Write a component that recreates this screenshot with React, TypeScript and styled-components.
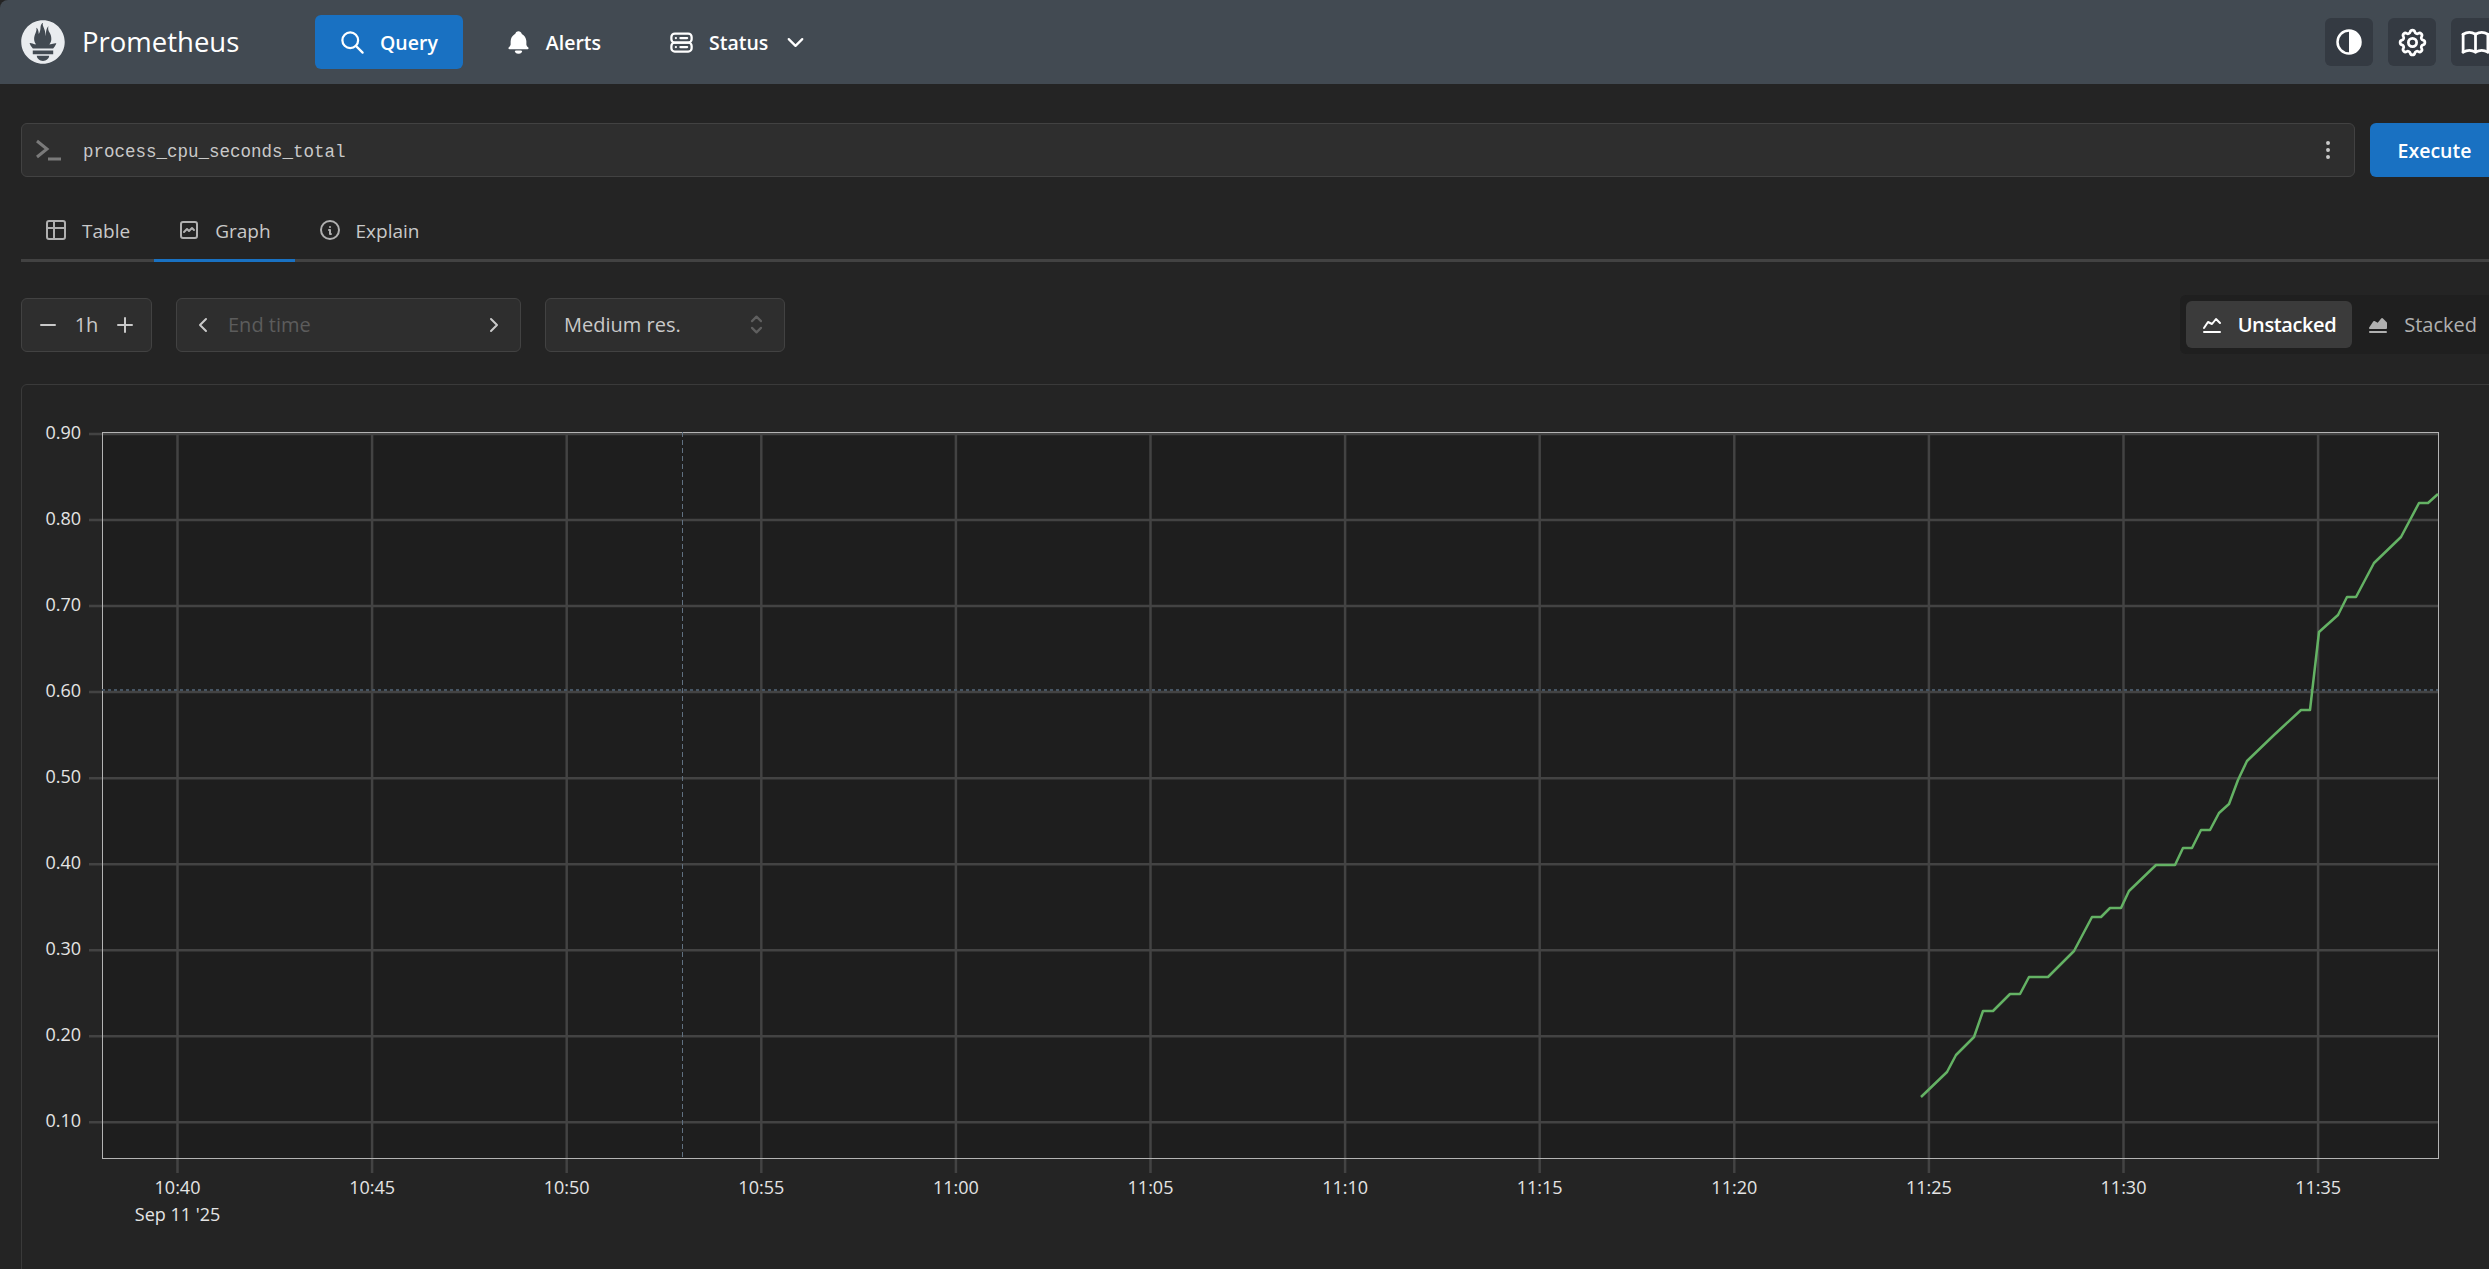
import { useMemo } from 'react';
import styled, { createGlobalStyle } from 'styled-components';
import {
  TbBellFilled,
  TbBook,
  TbChartAreaFilled,
  TbChartLine,
  TbChevronDown,
  TbChevronLeft,
  TbChevronRight,
  TbDotsVertical,
  TbGraph,
  TbInfoCircle,
  TbMinus,
  TbPlus,
  TbSearch,
  TbSelector,
  TbServer2,
  TbSettings,
  TbTable,
} from 'react-icons/tb';

const SANS = '"Open Sans", "Noto Sans", "Liberation Sans", sans-serif';

const GlobalStyle = createGlobalStyle`
  html, body {
    margin: 0;
    padding: 0;
    height: 100%;
    overflow: hidden;
    background: #242424;
  }
  body {
    font-family: ${SANS};
  }
`;

const LOGO =
  'M56.667.667C25.372.667 0 26.036 0 57.332c0 31.295 25.372 56.666 56.667 56.666s56.666-25.371 56.666-56.666C113.333 26.036 87.961.667 56.667.667zm0 106.055c-8.904 0-16.123-5.948-16.123-13.283H72.79c0 7.334-7.219 13.283-16.123 13.283zM83.297 89H30.034v-9.658h53.264V89zm-.191-14.629H30.186c-.176-.203-.356-.403-.526-.609-5.452-6.62-6.736-10.076-7.983-13.598-.021-.116 6.611 1.355 11.314 2.413 0 0 2.42.56 5.958 1.205-3.397-3.982-5.414-9.044-5.414-14.218 0-11.359 8.712-21.285 5.569-29.308 3.059.249 6.331 6.456 6.552 16.161 3.252-4.494 4.613-12.701 4.613-17.733 0-5.21 3.433-11.262 6.867-11.469-3.061 5.045.793 9.37 4.219 20.099 1.285 4.03 1.121 10.812 2.113 15.113C63.797 33.534 65.333 20.5 71 16c-2.5 5.667.37 12.758 2.333 16.167 3.167 5.5 5.087 9.667 5.087 17.548 0 5.284-1.951 10.259-5.242 14.148 3.742-.702 6.326-1.335 6.326-1.335l12.152-2.371c.001-.001-1.765 7.261-8.55 14.214z';

// chart geometry, in page pixels relative to the panel's svg
const PLOT = { left: 102, top: 432, right: 2438, bottom: 1158 };
const X_TICKS = ['10:40', '10:45', '10:50', '10:55', '11:00', '11:05', '11:10', '11:15', '11:20', '11:25', '11:30', '11:35'];
const Y_TICKS = ['0.90', '0.80', '0.70', '0.60', '0.50', '0.40', '0.30', '0.20', '0.10'];
const SERIES: [number, number][] = [
  [1921, 1097], [1947, 1072], [1956, 1055], [1974, 1037], [1983, 1011], [1993, 1011],
  [2010, 994], [2020, 994], [2029, 977], [2048, 977], [2074, 951], [2092, 917],
  [2101, 917], [2110, 908], [2121, 908], [2129, 891], [2156, 865], [2175, 865],
  [2183, 848], [2192, 848], [2201, 830], [2210, 830], [2219, 813], [2229, 804],
  [2238, 780], [2247, 761], [2274, 735], [2301, 710], [2310, 710], [2319, 632],
  [2338, 615], [2347, 597], [2356, 597], [2374, 563], [2401, 537], [2419, 503],
  [2428, 503], [2438, 494],
];
const SVG_LEFT = 22;
const SVG_TOP = 385;

const Chart = () => {
  const points = useMemo(
    () => SERIES.map(([x, y]) => `${x - SVG_LEFT},${y - SVG_TOP}`).join(' '),
    [],
  );
  const left = PLOT.left - SVG_LEFT;
  const right = PLOT.right - SVG_LEFT;
  const top = PLOT.top - SVG_TOP;
  const bottom = PLOT.bottom - SVG_TOP;
  return (
    <ChartSvg width={2476} height={884}>
      <rect x={left} y={top} width={right - left} height={bottom - top} fill="#1e1e1e" />
      {X_TICKS.map((label, i) => {
        const x = 177.5 + i * 194.6 - SVG_LEFT;
        return (
          <g key={label}>
            <line x1={x} x2={x} y1={top + 2} y2={bottom + 15} stroke="#434343" strokeWidth={2.5} />
            <AxisText x={x} y={bottom + 36} textAnchor="middle">
              {label}
            </AxisText>
          </g>
        );
      })}
      {Y_TICKS.map((label, i) => {
        const y = 434 + i * 86.04 - SVG_TOP;
        return (
          <g key={label}>
            <line x1={left - 13} x2={right} y1={y} y2={y} stroke="#434343" strokeWidth={2.5} />
            <AxisText x={81 - SVG_LEFT} y={y + 5} textAnchor="end">
              {label}
            </AxisText>
          </g>
        );
      })}
      <AxisText x={177.5 - SVG_LEFT} y={bottom + 63} textAnchor="middle">
        Sep 11 '25
      </AxisText>
      <rect
        x={left + 0.5}
        y={top + 0.5}
        width={right - left}
        height={bottom - top}
        fill="none"
        stroke="#b4b4b4"
      />
      <line x1={682.5 - SVG_LEFT} x2={682.5 - SVG_LEFT} y1={top} y2={bottom} stroke="#607080" strokeDasharray="5 3" />
      <line x1={left} x2={right} y1={690 - SVG_TOP} y2={690 - SVG_TOP} stroke="#465462" strokeWidth={2} strokeDasharray="3 3" />
      <polyline points={points} fill="none" stroke="#64b264" strokeWidth={2.5} strokeLinejoin="round" />
    </ChartSvg>
  );
};

const App = () => {
  return (
    <Page>
      <GlobalStyle />
      <Header>
        <Brand>
          <svg width="44" height="44" viewBox="0 0 113.4 114.7">
            <path d={LOGO} fill="#e9ecef" />
          </svg>
          <BrandName>Prometheus</BrandName>
        </Brand>
        <Nav>
          <NavItem $active>
            <TbSearch size={27} />
            Query
          </NavItem>
          <NavItem>
            <TbBellFilled size={27} />
            Alerts
          </NavItem>
          <NavItem>
            <TbServer2 size={27} />
            Status
            <TbChevronDown size={27} />
          </NavItem>
        </Nav>
        <HeaderActions>
          <ActionButton>
            <svg width="30" height="30" viewBox="0 0 30 30">
              <circle cx="15" cy="15" r="11.5" fill="none" stroke="#fff" strokeWidth="2.5" />
              <path d="M15 3.5a11.5 11.5 0 0 1 0 23z" fill="#fff" />
            </svg>
          </ActionButton>
          <ActionButton>
            <TbSettings size={33} />
          </ActionButton>
          <ActionButton>
            <TbBook size={33} />
          </ActionButton>
        </HeaderActions>
      </Header>
      <Main>
        <QueryRow>
          <QueryBox>
            <PromptIcon>
              <svg width="28" height="24" viewBox="0 0 28 24" fill="none" stroke="currentColor">
                <path d="M2 3l10 8l-10 8" strokeWidth="3" />
                <path d="M13 21h13" strokeWidth="3" />
              </svg>
            </PromptIcon>
            <QueryText>process_cpu_seconds_total</QueryText>
            <MoreIcon>
              <TbDotsVertical size={24} />
            </MoreIcon>
          </QueryBox>
          <ExecuteButton>Execute</ExecuteButton>
        </QueryRow>
        <Tabs>
          <Tab>
            <TabIcon>
              <TbTable size={24} />
            </TabIcon>
            <TabLabel>Table</TabLabel>
          </Tab>
          <Tab $active>
            <TabIcon>
              <TbGraph size={24} />
            </TabIcon>
            <TabLabel>Graph</TabLabel>
          </Tab>
          <Tab>
            <TabIcon>
              <TbInfoCircle size={24} />
            </TabIcon>
            <TabLabel>Explain</TabLabel>
          </Tab>
        </Tabs>
        <Controls>
          <ControlBox $width={131}>
            <StepIcon>
              <TbMinus size={24} />
            </StepIcon>
            <RangeValue>1h</RangeValue>
            <StepIcon>
              <TbPlus size={24} />
            </StepIcon>
          </ControlBox>
          <ControlBox $width={345}>
            <StepIcon>
              <TbChevronLeft size={24} />
            </StepIcon>
            <EndTime>End time</EndTime>
            <StepIcon>
              <TbChevronRight size={24} />
            </StepIcon>
          </ControlBox>
          <ControlBox $width={240}>
            <ResValue>Medium res.</ResValue>
            <SelectorIcon>
              <TbSelector size={27} />
            </SelectorIcon>
          </ControlBox>
          <Segmented>
            <Segment $active>
              <TbChartLine size={24} />
              Unstacked
            </Segment>
            <Segment>
              <TbChartAreaFilled size={24} />
              Stacked
            </Segment>
          </Segmented>
        </Controls>
        <Panel>
          <Chart />
        </Panel>
      </Main>
    </Page>
  );
};

const Page = styled.div`
  width: 2520px;
  height: 1269px;
  overflow: hidden;
  background: #242424;
`;

const Header = styled.header`
  height: 84px;
  box-sizing: border-box;
  display: flex;
  align-items: center;
  padding: 0 21px;
  background: #424a52;
  border-top-left-radius: 8px;
`;

const Brand = styled.div`
  display: flex;
  align-items: center;
  gap: 17px;
  width: 294px;
  color: #fff;
`;

const BrandName = styled.span`
  font-size: 27.5px;
  line-height: 1;
`;

const Nav = styled.nav`
  display: flex;
  align-items: center;
  gap: 18px;
`;

const NavItem = styled.a<{ $active?: boolean }>`
  display: flex;
  align-items: center;
  gap: 14px;
  height: 54px;
  padding: 0 25px 0 24px;
  border-radius: 6px;
  font-size: 19.5px;
  font-weight: 600;
  color: #fff;
  background: ${({ $active }) => ($active ? '#1971c2' : 'transparent')};
`;

const HeaderActions = styled.div`
  margin-left: auto;
  display: flex;
  gap: 15px;
`;

const ActionButton = styled.button`
  width: 48px;
  height: 48px;
  padding: 0;
  border: none;
  border-radius: 6px;
  display: flex;
  align-items: center;
  justify-content: center;
  color: #fff;
  background: #343a42;
`;

const Main = styled.main`
  padding: 39px 21px 0;
`;

const QueryRow = styled.div`
  display: flex;
  gap: 15px;
`;

const QueryBox = styled.div`
  flex: 1;
  height: 54px;
  box-sizing: border-box;
  display: flex;
  align-items: center;
  padding: 0 14px 0 12px;
  background: #2e2e2e;
  border: 1px solid #424242;
  border-radius: 6px;
`;

const PromptIcon = styled.span`
  display: flex;
  width: 48px;
  margin-left: 1px;
  color: #7a7a7a;
`;

const QueryText = styled.span`
  flex: 1;
  padding-top: 3px;
  font-family: 'Liberation Mono', monospace;
  font-size: 17.5px;
  color: #c9c9c9;
`;

const MoreIcon = styled.span`
  display: flex;
  color: #c9c9c9;
`;

const ExecuteButton = styled.button`
  width: 129px;
  height: 54px;
  border: none;
  border-radius: 6px;
  font-family: ${SANS};
  font-size: 19.5px;
  font-weight: 600;
  color: #fff;
  background: #1971c2;
`;

const Tabs = styled.div`
  display: flex;
  box-sizing: border-box;
  height: 62px;
  margin-top: 23px;
  border-bottom: 3px solid #424242;
`;

const Tab = styled.div<{ $active?: boolean }>`
  display: flex;
  align-items: center;
  gap: 14px;
  padding: 0 24px 0 23px;
  margin-bottom: -3px;
  font-size: 19px;
  color: #c9c9c9;
  border-bottom: 3px solid ${({ $active }) => ($active ? '#1971c2' : 'transparent')};
`;

const TabIcon = styled.span`
  display: flex;
  color: #b0b0b0;
`;

const TabLabel = styled.span`
  padding-top: 3px;
`;

const Controls = styled.div`
  display: flex;
  align-items: center;
  gap: 24px;
  margin-top: 33px;
`;

const ControlBox = styled.div<{ $width: number }>`
  width: ${({ $width }) => $width}px;
  height: 54px;
  box-sizing: border-box;
  display: flex;
  align-items: center;
  justify-content: space-between;
  padding: 0 14px;
  background: #2e2e2e;
  border: 1px solid #424242;
  border-radius: 6px;
`;

const StepIcon = styled.span`
  display: flex;
  color: #c9c9c9;
`;

const RangeValue = styled.span`
  font-size: 20px;
  color: #c9c9c9;
`;

const EndTime = styled.span`
  flex: 1;
  margin-left: 13px;
  font-size: 20px;
  color: #5c5c5c;
`;

const ResValue = styled.span`
  margin-left: 4px;
  font-size: 20px;
  color: #c9c9c9;
`;

const SelectorIcon = styled.span`
  display: flex;
  color: #5f5f5f;
`;

const Segmented = styled.div`
  margin-left: auto;
  display: flex;
  padding: 6px;
  border-radius: 6px;
  background: #1f1f1f;
`;

const Segment = styled.div<{ $active?: boolean }>`
  display: flex;
  align-items: center;
  gap: 14px;
  height: 47px;
  padding: 0 16px 0 14px;
  border-radius: 6px;
  font-size: 20px;
  font-weight: ${({ $active }) => ($active ? 600 : 400)};
  letter-spacing: ${({ $active }) => ($active ? '-0.4px' : '0')};
  color: ${({ $active }) => ($active ? '#fff' : '#b0b0b0')};
  background: ${({ $active }) => ($active ? '#3b3b3b' : 'transparent')};
`;

const Panel = styled.section`
  margin-top: 30px;
  height: 900px;
  border: 1px solid #3a3a3a;
  border-radius: 6px;
`;

const ChartSvg = styled.svg`
  display: block;
`;

const AxisText = styled.text`
  font-family: ${SANS};
  font-size: 18px;
  fill: #e4e4e4;
`;

export default App;
